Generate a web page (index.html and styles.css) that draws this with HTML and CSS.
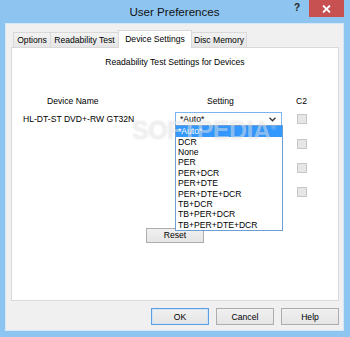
FILE: index.html
```html
<!DOCTYPE html>
<html lang="en">
<head>
  <meta charset="UTF-8" />
  <title>User Preferences</title>
  <link rel="stylesheet" href="styles.css">
</head>
<body>
  <div class="window">
    <div class="titlebar">
      <div></div>
      <div class="title">User Preferences</div>
      <div class="caption">
        <span class="help">?</span>
        <button class="close">
          <svg width="9" height="8" viewBox="0 0 9 8"><path d="M1 0.5 L8 7.5 M8 0.5 L1 7.5" stroke="#fff" stroke-width="1.8"/></svg>
        </button>
      </div>
    </div>

    <div class="client">
      <div class="tabs">
        <div class="tab tab-options">Options</div>
        <div class="tab tab-read">Readability Test</div>
        <div class="tab tab-device active">Device Settings</div>
        <div class="tab tab-disc">Disc Memory</div>
      </div>

      <div class="panel">
        <div class="panel-title">Readability Test Settings for Devices</div>

        <div class="devices">
          <div class="hdr hdr-name">Device Name</div>
          <div class="hdr hdr-setting">Setting</div>
          <div class="hdr hdr-c2">C2</div>

          <div class="dev-name">HL-DT-ST DVD+-RW GT32N</div>
          <div class="combo">
            <span>*Auto*</span>
            <svg width="7" height="5" viewBox="0 0 7 5"><path d="M0.5 0.8 L3.5 3.8 L6.5 0.8" fill="none" stroke="#333" stroke-width="1.3"/></svg>
            <ul class="droplist">
              <li class="selected">*Auto*</li>
              <li>DCR</li>
              <li>None</li>
              <li>PER</li>
              <li>PER+DCR</li>
              <li>PER+DTE</li>
              <li>PER+DTE+DCR</li>
              <li>TB+DCR</li>
              <li>TB+PER+DCR</li>
              <li>TB+PER+DTE+DCR</li>
            </ul>
          </div>
          <span class="check"></span>

          <div></div><div></div><span class="check"></span>
          <div></div><div></div><span class="check"></span>
          <div></div><div></div><span class="check"></span>
        </div>

        <button class="btn reset">Reset</button>
        <div class="watermark">SOFTPEDIA<sup>®</sup></div>
      </div>

      <div class="actions">
        <button class="btn default">OK</button>
        <button class="btn">Cancel</button>
        <button class="btn">Help</button>
      </div>
    </div>
  </div>
</body>
</html>
```

FILE: styles.css
```css
body {
  margin: 0;
  font-family: "Liberation Sans", Arial, sans-serif;
  font-size: 8.6px;
  color: #000;
}
.window {
  width: 350px;
  height: 337px;
  box-sizing: border-box;
  background: #8ec4f0;
  padding: 0 6px 6px 5px;
  display: flex;
  flex-direction: column;
}
.titlebar {
  height: 23px;
  display: grid;
  grid-template-columns: 1fr auto 1fr;
  align-items: start;
}
.title {
  font-size: 11.6px;
  line-height: 23px;
  color: #111;
}
.caption {
  justify-self: end;
  display: flex;
  align-items: flex-start;
  gap: 9px;
}
.help {
  font-weight: bold;
  font-size: 10px;
  line-height: 16px;
  color: #222;
}
.close {
  width: 35px;
  height: 17px;
  margin: 0;
  padding: 0;
  border: none;
  background: #c75050;
  display: flex;
  align-items: center;
  justify-content: center;
}
.client {
  flex: 1;
  background: #f0f0f0;
  border: 1px solid #d3e7f9;
  padding: 6px 4px 0 5px;
  display: flex;
  flex-direction: column;
}
.tabs {
  height: 17px;
  display: flex;
  align-items: flex-end;
  margin-left: 2px;
}
.tab {
  box-sizing: border-box;
  height: 15px;
  border: 1px solid #d9d9d9;
  border-bottom: none;
  background: linear-gradient(#f2f2f2, #e6e6e6);
  display: flex;
  align-items: center;
  justify-content: center;
  white-space: nowrap;
}
.tab + .tab { margin-left: -1px; }
.tab-options { width: 38px; }
.tab-read { width: 69px; }
.tab-device { width: 74px; }
.tab-disc { width: 56px; }
.tab.active {
  height: 18px;
  margin-bottom: -1px;
  padding-bottom: 2px;
  background: #fff;
  position: relative;
  z-index: 2;
}
.panel {
  height: 254px;
  box-sizing: border-box;
  border: 1px solid #d9d9d9;
  background: #fff;
  position: relative;
}
.panel-title {
  margin-top: 7px;
  line-height: 14px;
  text-align: center;
}
.devices {
  margin-top: 26px;
  padding-left: 11px;
  display: grid;
  grid-template-columns: 152px 107px 25px;
  grid-template-rows: 12px repeat(4, 24.4px);
  align-items: center;
}
.hdr { line-height: 12px; }
.hdr-name { padding-left: 24px; }
.hdr-setting { padding-left: 32px; }
.hdr-c2 { justify-self: end; }
.dev-name { white-space: nowrap; }
.combo {
  box-sizing: border-box;
  height: 14px;
  border: 1px solid #7eb4ea;
  background: #fff;
  padding: 0 5px 0 4px;
  display: flex;
  align-items: center;
  justify-content: space-between;
  position: relative;
}
.droplist {
  position: absolute;
  top: 100%;
  left: -1px;
  width: 108px;
  box-sizing: border-box;
  margin: 0;
  padding: 0;
  list-style: none;
  background: #fff;
  border: 1px solid #6f9ed4;
  z-index: 3;
}
.droplist li {
  height: 10.4px;
  line-height: 10.4px;
  padding-left: 2px;
  white-space: nowrap;
}
.droplist li.selected {
  background: #3399ff;
  color: #fff;
}
.check {
  justify-self: end;
  width: 10px;
  height: 10px;
  box-sizing: border-box;
  border: 1px solid #c6c6c6;
  background: #e6e6e6;
}
.btn {
  box-sizing: border-box;
  margin: 0;
  padding: 0;
  border: 1px solid #adadad;
  background: linear-gradient(#f0f0f0, #e5e5e5);
  font-family: inherit;
  font-size: 8.6px;
  color: #000;
}
.reset {
  display: block;
  width: 58px;
  height: 15px;
  margin: 23px auto 0;
}
.actions {
  margin-top: 7px;
  display: flex;
  justify-content: flex-end;
  gap: 7px;
}
.actions .btn {
  width: 58px;
  height: 17px;
}
.btn.default {
  border-color: #5e9fe3;
  box-shadow: inset 0 0 0 1px #cfe3f8;
}
.watermark {
  position: absolute;
  left: 120px;
  top: 68px;
  font-size: 25px;
  font-weight: bold;
  letter-spacing: -0.5px;
  color: rgba(255, 255, 255, 0.45);
  text-shadow: 0 0 2px rgba(0, 0, 0, 0.12);
  z-index: 4;
  pointer-events: none;
}
.watermark sup {
  font-size: 8px;
}
```
